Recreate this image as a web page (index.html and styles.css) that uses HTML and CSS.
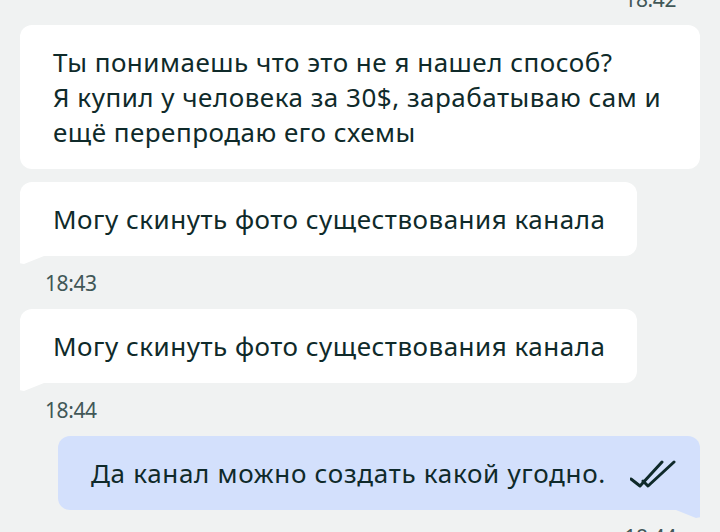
FILE: index.html
```html
<!DOCTYPE html>
<html lang="ru">
<head>
    <meta charset="UTF-8">
    <meta name="viewport" content="width=device-width, initial-scale=1.0">
    <title>Чат</title>
    <link rel="stylesheet" href="styles.css">
</head>
<body>
    <div class="chat">
        <div class="time time-out">18:42</div>

        <div class="msg msg-in">Ты понимаешь что это не я нашел способ?<br>Я купил у человека за 30$, зарабатываю сам и ещё перепродаю его схемы</div>
        <div class="msg msg-in tail">Могу скинуть фото существования канала</div>
        <div class="time time-in">18:43</div>

        <div class="msg msg-in tail">Могу скинуть фото существования канала</div>
        <div class="time time-in">18:44</div>

        <div class="msg msg-out tail">
            <span>Да канал можно создать какой угодно.</span>
            <svg class="checks" width="46" height="28" viewBox="0 0 46 28">
                <path d="M1 19 L10 26 L32 2" />
                <path d="M13 21 L18 26 L44 2" />
            </svg>
        </div>
        <div class="time time-out">18:44</div>
    </div>
</body>
</html>
```

FILE: styles.css
```css
body {
    margin: 0;
    background-color: #f0f2f2;
    font-family: "Noto Sans", "Open Sans", sans-serif;
    color: #0f2a2a;
    overflow: hidden;
}
.chat {
    display: flex;
    flex-direction: column;
    gap: 13px;
    padding: 0 20px;
    margin-top: -15px;
}
.time {
    font-size: 21px;
    line-height: 26px;
    color: #415757;
    letter-spacing: -0.4px;
    margin-top: 1px;
}
.time-in {
    padding-left: 25px;
}
.time-out {
    align-self: flex-end;
    padding-right: 24px;
}
.msg {
    position: relative;
    font-size: 26px;
    line-height: 35px;
    letter-spacing: 0.5px;
    padding: 20px 32px 19px 33px;
    border-radius: 12px;
    max-width: 680px;
    box-sizing: border-box;
}
.msg-in {
    align-self: flex-start;
    background: #ffffff;
}
.msg-out {
    align-self: flex-end;
    background: #d3e0fc;
    display: flex;
    align-items: center;
    gap: 24px;
    padding-right: 24px;
    letter-spacing: 0.7px;
}
.msg-in.tail {
    border-bottom-left-radius: 0;
}
.msg-out.tail {
    border-bottom-right-radius: 0;
}
.msg-in.tail::after {
    content: "";
    position: absolute;
    left: 0;
    bottom: -8px;
    width: 24px;
    height: 8px;
    background: #ffffff;
    clip-path: polygon(0 0, 100% 0, 4px 100%, 0 90%);
}
.msg-out.tail::after {
    content: "";
    position: absolute;
    right: 0;
    bottom: -8px;
    width: 24px;
    height: 8px;
    background: #d3e0fc;
    clip-path: polygon(0 0, 100% 0, 100% 90%, calc(100% - 4px) 100%);
}
.checks {
    flex: none;
    fill: none;
    stroke: #0f2a2a;
    stroke-width: 3;
    stroke-linecap: round;
    stroke-linejoin: round;
}
```
